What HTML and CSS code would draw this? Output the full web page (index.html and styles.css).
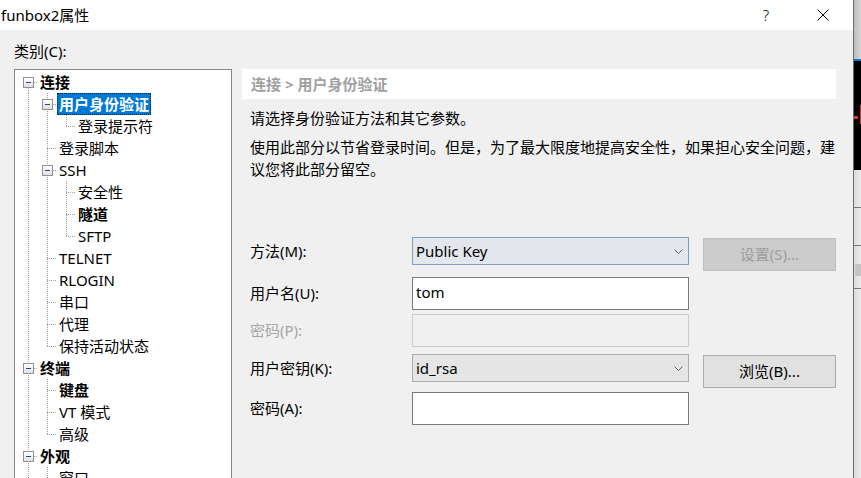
FILE: index.html
```html
<!DOCTYPE html>
<html lang="zh-CN">
<head>
<meta charset="utf-8">
<title>funbox2属性</title>
<link rel="stylesheet" href="styles.css">
</head>
<body>
<div class="screen">
  <div class="dialog">
    <div class="titlebar">
      <span class="title">funbox2属性</span>
      <span class="help">?</span>
      <span class="close"><svg width="12" height="12" viewBox="0 0 12 12"><path d="M0.5 0.5 L11.5 11.5 M11.5 0.5 L0.5 11.5" stroke="#000" stroke-width="1" fill="none"/></svg></span>
    </div>
    <div class="content">
      <div class="cat-label">类别(C):</div>
      <div class="main">
        <div class="tree">
          <div class="row"><span class="g first"><i class="box"></i></span><span class="lbl b">连接</span></div>
          <div class="row"><span class="g pipe"></span><span class="g tee"><i class="box"></i></span><span class="lbl b sel">用户身份验证</span></div>
          <div class="row"><span class="g pipe"></span><span class="g pipe"></span><span class="g elbow"></span><span class="lbl">登录提示符</span></div>
          <div class="row"><span class="g pipe"></span><span class="g tee"></span><span class="lbl">登录脚本</span></div>
          <div class="row"><span class="g pipe"></span><span class="g tee"><i class="box"></i></span><span class="lbl">SSH</span></div>
          <div class="row"><span class="g pipe"></span><span class="g pipe"></span><span class="g tee"></span><span class="lbl">安全性</span></div>
          <div class="row"><span class="g pipe"></span><span class="g pipe"></span><span class="g tee"></span><span class="lbl b">隧道</span></div>
          <div class="row"><span class="g pipe"></span><span class="g pipe"></span><span class="g elbow"></span><span class="lbl">SFTP</span></div>
          <div class="row"><span class="g pipe"></span><span class="g tee"></span><span class="lbl">TELNET</span></div>
          <div class="row"><span class="g pipe"></span><span class="g tee"></span><span class="lbl">RLOGIN</span></div>
          <div class="row"><span class="g pipe"></span><span class="g tee"></span><span class="lbl">串口</span></div>
          <div class="row"><span class="g pipe"></span><span class="g tee"></span><span class="lbl">代理</span></div>
          <div class="row"><span class="g pipe"></span><span class="g elbow"></span><span class="lbl">保持活动状态</span></div>
          <div class="row"><span class="g tee"><i class="box"></i></span><span class="lbl b">终端</span></div>
          <div class="row"><span class="g pipe"></span><span class="g tee"></span><span class="lbl b">键盘</span></div>
          <div class="row"><span class="g pipe"></span><span class="g tee"></span><span class="lbl">VT 模式</span></div>
          <div class="row"><span class="g pipe"></span><span class="g elbow"></span><span class="lbl">高级</span></div>
          <div class="row"><span class="g tee"><i class="box"></i></span><span class="lbl b">外观</span></div>
          <div class="row"><span class="g pipe"></span><span class="g tee"></span><span class="lbl">窗口</span></div>
        </div>
        <div class="panel">
          <div class="crumb">连接 &gt; 用户身份验证</div>
          <p class="p1">请选择身份验证方法和其它参数。</p>
          <p class="p2">使用此部分以节省登录时间。但是，为了最大限度地提高安全性，如果担心安全问题，建议您将此部分留空。</p>
          <div class="form">
            <div class="frow r1">
              <span class="flabel sel-h">方法(M):</span>
              <div class="select focus"><span class="val">Public Key</span><svg class="chev" width="9" height="5" viewBox="0 0 9 5"><path d="M0.5 0.5 L4.5 4.5 L8.5 0.5" stroke="#606060" fill="none"/></svg></div>
              <div class="btn disabled">设置(S)...</div>
            </div>
            <div class="frow r2">
              <span class="flabel in-h">用户名(U):</span>
              <div class="input"><span class="val">tom</span></div>
            </div>
            <div class="frow r3">
              <span class="flabel in-h dim">密码(P):</span>
              <div class="input off"></div>
            </div>
            <div class="frow r4">
              <span class="flabel sel-h">用户密钥(K):</span>
              <div class="select"><span class="val">id_rsa</span><svg class="chev" width="9" height="5" viewBox="0 0 9 5"><path d="M0.5 0.5 L4.5 4.5 L8.5 0.5" stroke="#606060" fill="none"/></svg></div>
              <div class="btn">浏览(B)...</div>
            </div>
            <div class="frow r5">
              <span class="flabel in-h">密码(A):</span>
              <div class="input"></div>
            </div>
          </div>
        </div>
      </div>
    </div>
  </div>
  <div class="edge"></div>
  <div class="strip">
    <div class="s1"></div>
    <div class="s2"></div>
    <div class="s3"></div>
    <div class="s4"></div>
  </div>
</div>
</body>
</html>
```
FILE: styles.css
```css
* { box-sizing: border-box; }
html, body { margin: 0; padding: 0; }
body {
  font-family: "Noto Sans", "Noto Sans CJK SC", sans-serif;
  font-size: 15px;
  color: #000;
  background: #f0f0f0;
}
.screen {
  display: flex;
  width: 861px;
  height: 478px;
  overflow: hidden;
}
.dialog {
  width: 853px;
  flex: none;
  background: #f0f0f0;
  display: flex;
  flex-direction: column;
}
.titlebar {
  height: 30px;
  background: #fff;
  display: flex;
  align-items: center;
  padding: 0 18px 0 1px;
  flex: none;
}
.title { flex: 1; line-height: 30px; }
.help { width: 20px; text-align: center; line-height: 30px; font-weight: 300; }
.close { width: 24px; margin-left: 35px; display: flex; justify-content: center; align-items: center; height: 30px; padding-bottom: 1px; }
.content {
  padding: 11px 17px 0 14px;
}
.cat-label { line-height: 21px; height: 21px; margin-bottom: 7px; }
.main { display: flex; align-items: flex-start; }

.tree {
  width: 218px;
  height: 420px;
  flex: none;
  background: #fff;
  border: 1px solid #828790;
  padding: 1px 0 0 4px;
  overflow: hidden;
}
.row { display: flex; height: 22px; }
.g {
  width: 19px;
  height: 22px;
  flex: none;
  background-repeat: no-repeat;
}
.pipe {
  background-image: repeating-linear-gradient(to bottom, #a0a0a0 0 1px, transparent 1px 2px);
  background-size: 1px 22px;
  background-position: 9px 0;
}
.tee {
  background-image: repeating-linear-gradient(to bottom, #a0a0a0 0 1px, transparent 1px 2px),
                    repeating-linear-gradient(to right, #a0a0a0 0 1px, transparent 1px 2px);
  background-size: 1px 22px, 10px 1px;
  background-position: 9px 0, 9px 11px;
}
.elbow {
  background-image: repeating-linear-gradient(to bottom, #a0a0a0 0 1px, transparent 1px 2px),
                    repeating-linear-gradient(to right, #a0a0a0 0 1px, transparent 1px 2px);
  background-size: 1px 12px, 10px 1px;
  background-position: 9px 0, 9px 11px;
}
.first {
  background-image: repeating-linear-gradient(to bottom, #a0a0a0 0 1px, transparent 1px 2px),
                    repeating-linear-gradient(to right, #a0a0a0 0 1px, transparent 1px 2px);
  background-size: 1px 11px, 10px 1px;
  background-position: 9px 11px, 9px 11px;
}
.box {
  display: block;
  width: 11px;
  height: 11px;
  margin: 6px 0 0 4px;
  border: 1px solid #919191;
  background: linear-gradient(#24477c, #24477c) 2px 4px / 5px 1px no-repeat,
              linear-gradient(#ffffff, #e0e0e0);
}
.lbl {
  height: 22px;
  padding: 0 1px;
  border: 1px dotted transparent;
  line-height: 20px;
  white-space: nowrap;
}
.lbl.b { font-weight: 700; }
.lbl.sel {
  background: #0078d7;
  color: #fff;
  border-color: #222;
}

.panel {
  width: 594px;
  margin-left: 10px;
  flex: none;
}
.crumb {
  height: 30px;
  line-height: 30px;
  background: #fff;
  padding-left: 9px;
  color: #a0a0a0;
  font-weight: 700;
}
.p1, .p2 {
  margin: 0;
  padding-left: 8px;
}
.p1 { margin-top: 9px; line-height: 21px; }
.p2 { margin-top: 7px; line-height: 22px; width: 600px; }
.form { margin-top: 57px; padding-left: 8px; }
.frow { display: flex; align-items: flex-start; }
.flabel { width: 162px; flex: none; white-space: nowrap; }
.flabel.sel-h { line-height: 28px; }
.flabel.in-h { line-height: 33px; }
.flabel.dim { color: #a6a6a6; }
.r2 { margin-top: 6px; }
.r3 { margin-top: 4px; }
.r4 { margin-top: 7px; }
.r5 { margin-top: 4px; }

.select {
  width: 277px;
  height: 28px;
  flex: none;
  display: flex;
  align-items: center;
  padding: 0 5px 0 3px;
  background: #e5e5e5;
  border: 1px solid #adadad;
}
.select.focus {
  background: #e3e6ea;
  border-color: #7c9fc1;
}
.select .val { flex: 1; line-height: 26px; }
.chev { flex: none; display: block; }
.input {
  width: 277px;
  height: 33px;
  flex: none;
  background: #fff;
  border: 1px solid #7a7a7a;
  padding: 0 3px;
  line-height: 29px;
}
.input.off {
  background: #f0f0f0;
  border-color: #cccccc;
}
.btn {
  width: 133px;
  height: 33px;
  flex: none;
  margin: 1px 0 0 14px;
  background: #e1e1e1;
  border: 1px solid #adadad;
  text-align: center;
  line-height: 31px;
}
.btn.disabled {
  background: #cccccc;
  border-color: #bfbfbf;
  color: #9d9d9d;
}

.edge { width: 1px; flex: none; background: #6b6b6b; }
.strip {
  width: 7px;
  flex: none;
  display: flex;
  flex-direction: column;
}
.s1 { height: 59px; background: linear-gradient(to right, #bdbdbd, #d6d6d6); }
.s2 { height: 2px; background: #0a78d4; }
.s3 {
  height: 109px;
  background:
    linear-gradient(#d84040, #d84040) 0 55px / 4px 3px no-repeat,
    linear-gradient(#c83a3a, #c83a3a) 6px 44px / 1px 19px no-repeat,
    #000;
}
.s4 {
  flex: 1;
  background:
    linear-gradient(#7a7a7a, #7a7a7a) 0 37px / 7px 1px no-repeat,
    linear-gradient(#7a7a7a, #7a7a7a) 0 75px / 7px 1px no-repeat,
    linear-gradient(#7a7a7a, #7a7a7a) 0 118px / 7px 1px no-repeat,
    linear-gradient(#c4c4c4, #c4c4c4) 1px 94px / 6px 12px no-repeat,
    linear-gradient(to right, #dcdcdc, #ececec);
}
```
